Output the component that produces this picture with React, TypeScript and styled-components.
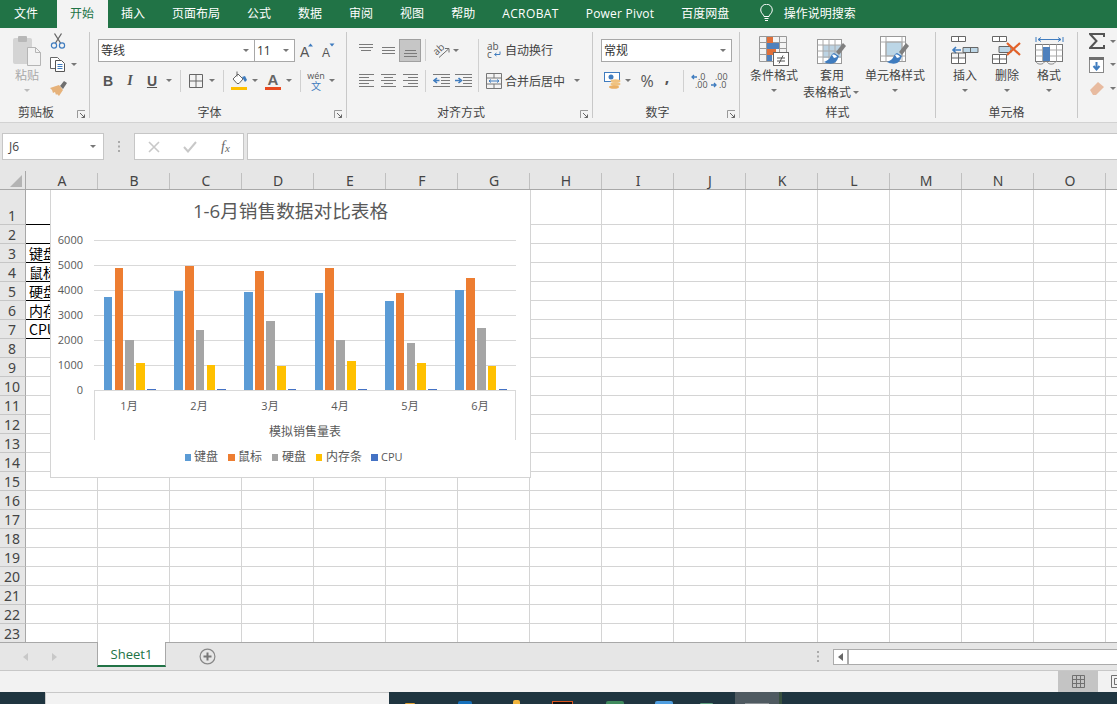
import React from 'react';
import styled, { createGlobalStyle } from 'styled-components';

const UI = `"Open Sans", "Noto Sans CJK SC", sans-serif`;

const Global = createGlobalStyle`
  html, body { margin: 0; padding: 0; overflow: hidden; background: #f2f2f2; }
  #root { width: 1117px; height: 704px; }
  * { box-sizing: border-box; }
`;

const Page = styled.div`
  width: 1117px; height: 704px; display: flex; flex-direction: column; overflow: hidden;
  font-family: ${UI}; font-size: 12px; color: #444;
`;

/* ---- tabs ---- */
const TabBar = styled.div`
  height: 28px; flex: none; background: #217346; display: flex; align-items: stretch; padding-left: 0.5px;
`;
const Tab = styled.div<{ $active?: boolean; $mr?: number; $ls?: number }>`
  padding: 0 13.5px 2px; display: flex; align-items: center; white-space: nowrap;
  color: ${p => (p.$active ? '#217346' : '#fff')};
  background: ${p => (p.$active ? '#f3f3f3' : 'transparent')};
  margin-right: ${p => p.$mr ?? 0}px; letter-spacing: ${p => p.$ls ?? 0}px;
`;
const Tell = styled.div`
  display: flex; align-items: center; gap: 11px; margin-left: 17px; color: #fff; padding-bottom: 2px; white-space: nowrap;
`;

/* ---- ribbon ---- */
const Ribbon = styled.div`
  height: 95px; flex: none; background: #f3f3f3; border-bottom: 1px solid #d2d2d2;
  display: flex; padding-top: 4px; padding-bottom: 4px;
`;
const Group = styled.div<{ $w: number; $last?: boolean }>`
  width: ${p => p.$w}px; flex: none; display: flex; flex-direction: column; justify-content: space-between;
  border-right: ${p => (p.$last ? 'none' : '1px solid #c8c8c8')};
`;
const Body = styled.div<{ $pl?: number }>`
  display: flex; padding-left: ${p => p.$pl ?? 0}px;
`;
const Rows = styled.div`
  display: flex; flex-direction: column; gap: 8px; padding-top: 7px;
`;
const Row = styled.div<{ $ml?: number }>`
  display: flex; align-items: center; height: 22.5px; margin-left: ${p => p.$ml ?? 0}px;
`;
const Footer = styled.div`
  height: 15px; margin-bottom: -2px; display: flex; align-items: center;
`;
const GroupLabel = styled.div`
  flex: 1; text-align: center; line-height: 15px; color: #444;
`;
const Launcher = styled.div`
  width: 17px; display: flex; justify-content: flex-end; padding-right: 3px; padding-top: 3px;
`;
const Tool = styled.div<{ $w?: number; $ml?: number; $on?: boolean }>`
  width: ${p => p.$w ?? 22}px; height: 22.5px; flex: none; display: flex; align-items: center; justify-content: center;
  margin-left: ${p => p.$ml ?? 0}px;
  background: ${p => (p.$on ? '#c6c6c6' : 'transparent')};
  border: ${p => (p.$on ? '1px solid #a0a0a0' : 'none')};
`;
const Caret = styled.div<{ $w?: number; $ml?: number; $tone?: string }>`
  width: ${p => p.$w ?? 10}px; flex: none; display: flex; justify-content: center; margin-left: ${p => p.$ml ?? 0}px;
  &::after {
    content: ''; width: 0; height: 0;
    border-left: 3.5px solid transparent; border-right: 3.5px solid transparent;
    border-top: 3.5px solid ${p => p.$tone ?? '#777'};
  }
`;
const VSep = styled.div<{ $ml?: number; $mr?: number; $reach?: boolean }>`
  width: 1px; height: 22px; flex: none; background: #d0d0d0; align-self: flex-start;
  margin-left: ${p => p.$ml ?? 0}px; margin-right: ${p => p.$mr ?? 0}px;
  ${p => (p.$reach ? 'height: 31px;' : '')}
`;
const Combo = styled.div<{ $w: number; $ml?: number }>`
  width: ${p => p.$w}px; height: 23px; flex: none; margin-left: ${p => p.$ml ?? 0}px;
  background: #fff; border: 1px solid #a8a8a8; display: flex; align-items: center; justify-content: space-between;
  padding: 1px 4px 0 2px; color: #333; line-height: 1;
`;
const BoldLetter = styled.span`
  font: bold 14px "Liberation Sans", sans-serif; color: #555;
`;
const ItalicLetter = styled.span`
  font: italic bold 14px "Liberation Serif", serif; color: #555;
`;
const UnderLetter = styled.span`
  font: bold 14px "Liberation Sans", sans-serif; color: #555; text-decoration: underline;
`;
const SymbolText = styled.span<{ $size?: number; $lift?: number; $bold?: boolean }>`
  font: ${p => (p.$bold ? 'bold ' : '')}${p => p.$size ?? 15}px "Open Sans", sans-serif; color: #555;
  padding-bottom: ${p => p.$lift ?? 0}px;
`;
const ToolText = styled.span`
  white-space: nowrap; color: #444; margin-left: 1px;
`;

const Big = styled.div<{ $w: number }>`
  width: ${p => p.$w}px; flex: none; display: flex; flex-direction: column; align-items: center; padding-top: 4px;
`;
const BigIcon = styled.div`
  height: 30px; display: flex; align-items: flex-start; justify-content: center;
`;
const BigLabel = styled.div<{ $off?: boolean }>`
  line-height: 15px; margin-top: 2px; white-space: nowrap; color: ${p => (p.$off ? '#a9a9a9' : '#444')};
  display: flex; align-items: center;
`;
const BigCaret = styled(Caret)`
  margin-top: 6px;
`;
const SmallCol = styled.div<{ $ml?: number }>`
  display: flex; flex-direction: column; gap: 5.5px; margin-left: ${p => p.$ml ?? 0}px;
`;
const SmallRow = styled.div`
  display: flex; align-items: center; height: 18px;
`;
const SmallTool = styled.div<{ $w?: number }>`
  width: ${p => p.$w ?? 16}px; height: 18px; flex: none; display: flex; align-items: center; justify-content: center;
`;

/* ---- formula bar ---- */
const FormulaBar = styled.div`
  height: 48px; flex: none; background: #e6e6e6; display: flex; padding: 10px 0 11px 2px;
`;
const FormulaBox = styled.div<{ $w?: number; $grow?: boolean; $ml?: number }>`
  background: #fff; border: 1px solid #c6c6c6; height: 27px; display: flex; align-items: center;
  width: ${p => (p.$w ? `${p.$w}px` : 'auto')}; flex: ${p => (p.$grow ? '1' : 'none')};
  margin-left: ${p => p.$ml ?? 0}px; margin-right: ${p => (p.$grow ? -2 : 0)}px;
`;
const NameBox = styled(FormulaBox)`
  justify-content: space-between; padding: 0 6px 0 6px; color: #444;
`;
const FormulaDots = styled.div`
  width: 30px; flex: none; display: flex; align-items: center; justify-content: center;
`;
const FormulaBtn = styled.div<{ $w: number }>`
  width: ${p => p.$w}px; flex: none; display: flex; justify-content: center; align-items: center;
`;
const FxText = styled.span`
  font: italic 14px "Liberation Serif", serif; color: #666;
`;
const FxSub = styled.span`
  font-size: 11px; vertical-align: -1px;
`;

/* ---- sheet ---- */
const SheetArea = styled.div`
  height: 471px; flex: none; position: relative; overflow: hidden; background: #fff;
`;
const SheetGrid = styled.div`
  display: grid; grid-template-columns: 26px repeat(16, 72px);
  grid-template-rows: 19px 35px repeat(22, 19px);
`;
const Corner = styled.div`
  background: #e6e6e6; border-right: 1px solid #a8a8a8; border-bottom: 1px solid #a8a8a8;
  display: flex; align-items: flex-end; justify-content: flex-end; padding: 0 3px 2px 0;
`;
const ColHead = styled.div`
  background: #e6e6e6; border-bottom: 1px solid #a8a8a8; position: relative;
  display: flex; align-items: center; justify-content: center;
  font: 14px "Noto Sans", sans-serif; color: #444; line-height: 1; padding-top: 1px;
  &::after { content: ''; position: absolute; right: 0; top: 2px; bottom: 0; width: 1px; background: #c0c0c0; }
`;
const RowHead = styled.div`
  background: #e6e6e6; border-right: 1px solid #a8a8a8; border-bottom: 1px solid #c6c6c6;
  display: flex; align-items: flex-end; justify-content: center;
  font: 14px "Noto Sans", sans-serif; color: #444; line-height: 16px; padding-right: 1px;
`;
const Cell = styled.div<{ $ruled?: boolean }>`
  border-right: 1px solid #d4d4d4; border-bottom: 1px solid ${p => (p.$ruled ? '#000' : '#d4d4d4')};
  font: 14px "Noto Sans CJK SC", sans-serif; color: #000; line-height: 18px; padding-left: 3px; white-space: nowrap;
  display: flex; align-items: flex-end;
`;
const Chart = styled.div`
  position: absolute; left: 50px; top: 19px; width: 481px; height: 288px;
  background: #fff; border: 1px solid #d4d4d4; border-top: none;
`;
const ChartSvg = styled.svg`
  display: block; margin-left: -1px; font-family: "Open Sans", "Noto Sans CJK SC", sans-serif;
`;

/* ---- sheet tabs ---- */
const SheetBar = styled.div`
  height: 29px; flex: none; background: #e6e6e6; border-top: 1px solid #a8a8a8; border-bottom: 1px solid #c8c8c8;
  display: flex; align-items: center;
`;
const NavArea = styled.div`
  width: 97px; flex: none; display: flex; padding-left: 23px; gap: 23px;
`;
const SheetTab = styled.div`
  width: 69px; height: 25px; flex: none; align-self: flex-start; margin-top: -1px; background: #fff;
  border-left: 1px solid #a8a8a8; border-right: 1px solid #a8a8a8; border-bottom: 2px solid #217346;
  display: flex; align-items: center; justify-content: center; color: #217346; font-size: 13px;
`;
const AddSheet = styled.div`
  margin-left: 33px; display: flex;
`;
const BarDots = styled.div`
  margin-left: auto; margin-right: 14px; display: flex;
`;
const HScroll = styled.div`
  width: 284px; height: 16px; flex: none; background: #fff; border: 1px solid #ababab; border-right: none; display: flex;
`;
const HScrollBtn = styled.div`
  width: 15px; border-right: 2px solid #ababab; display: flex; align-items: center; justify-content: center;
`;

/* ---- status + taskbar ---- */
const StatusBar = styled.div`
  height: 21px; flex: none; background: #f2f2f2; display: flex; padding-left: 1058px; overflow: hidden;
`;
const ViewBtn = styled.div<{ $on?: boolean }>`
  width: 40px; flex: none; display: flex; align-items: center; justify-content: center;
  background: ${p => (p.$on ? '#c4c4c4' : 'transparent')};
`;
const Taskbar = styled.div`
  height: 12px; flex: none; background: #1f3540; display: flex; align-items: flex-end; overflow: hidden;
`;
const SearchBox = styled.div`
  width: 344px; height: 12px; flex: none; margin-left: 45px; background: #f2f2f2; border-top: 1px solid #c8c8c8; border-left: 1px solid #c8c8c8;
`;
const TaskIcon = styled.div<{ $w: number; $h: number; $c: string; $ml: number }>`
  width: ${p => p.$w}px; height: ${p => p.$h}px; flex: none; background: ${p => p.$c}; margin-left: ${p => p.$ml}px;
  border-radius: 2px 2px 0 0;
`;
const TaskFramed = styled.div`
  width: 21px; height: 3px; flex: none; margin-left: 32px; background: #111; border: 1px solid #d9541e; border-bottom: none;
`;
const TaskActive = styled.div`
  width: 44px; height: 12px; flex: none; margin-left: 22px; background: #4f5a61; display: flex; align-items: flex-end; justify-content: center;
`;
const TaskTip = styled.div`
  width: 24px; height: 1px; background: #8c9296;
`;
const TaskEdge = styled.div`
  width: 3px; height: 12px; flex: none; background: #38503f;
`;

/* ---- icons ---- */
const G = '#6f6f6f';
const BL = '#3f7cbf';

const Ico: React.FC<{ w: number; h: number; children: React.ReactNode }> = ({ w, h, children }) => (
  <svg width={w} height={h} viewBox={`0 0 ${w} ${h}`} style={{ display: 'block', flex: 'none' }}>{children}</svg>
);

const LauncherIcon = () => (
  <Ico w={9} h={9}>
    <path d="M0.5 8V0.5H8" fill="none" stroke="#999" />
    <path d="M3 3l4.5 4.5M4.5 7.5h3v-3" fill="none" stroke="#666" />
  </Ico>
);
const PasteIcon = () => (
  <Ico w={28} h={30}>
    <rect x="0" y="2" width="19" height="26" rx="2" fill="#d4d4d4" />
    <rect x="5" y="0" width="9" height="6" rx="1" fill="#b8b8b8" />
    <path d="M14.5 11.5h8l5 5v13h-13z" fill="#f3f3f3" stroke="#b5b5b5" />
    <path d="M22.5 11.5v5h5" fill="none" stroke="#b5b5b5" />
  </Ico>
);
const ScissorsIcon = () => (
  <Ico w={16} h={16}>
    <path d="M5.5 10L11.5 0.5M10.5 10L4.5 0.5" stroke="#666" strokeWidth="1.3" fill="none" />
    <circle cx="4" cy="12.5" r="2.6" fill="none" stroke={BL} strokeWidth="1.2" />
    <circle cx="12" cy="12.5" r="2.6" fill="none" stroke={BL} strokeWidth="1.2" />
  </Ico>
);
const CopyIcon = () => (
  <Ico w={16} h={15}>
    <path d="M0.5 0.5h7l2 2v9h-9z" fill="#fff" stroke="#666" />
    <path d="M5.5 3.5h6l3 3v8h-9z" fill="#fff" stroke="#555" />
    <path d="M7.5 7.5h5M7.5 9.5h5M7.5 11.5h5" stroke={BL} />
  </Ico>
);
const PainterIcon = () => (
  <Ico w={17} h={15}>
    <path d="M10 5l4-5 3 2-4 6z" fill="#6f6f6f" />
    <path d="M0 7l9-3 4 5-4 6-2-2-1 1-1-3-2 1-1-3z" fill="#e6b27a" />
  </Ico>
);
const GrowIcon: React.FC<{ up?: boolean }> = ({ up }) => (
  <Ico w={18} h={16}>
    <text x="2" y="15" fontSize={up ? 14 : 12} fill="#555" fontFamily="Liberation Sans, sans-serif">A</text>
    {up ? <path d="M10 4.5l2.5-3 2.5 3z" fill={BL} /> : <path d="M9.5 1.5h5l-2.5 3z" fill={BL} />}
  </Ico>
);
const BordersIcon = () => (
  <Ico w={14} h={14}>
    <path d="M0.5 0.5h13v13h-13zM7 0.5v13M0.5 7h13" fill="none" stroke="#666" />
  </Ico>
);
const FillIcon = () => (
  <Ico w={16} h={19}>
    <path d="M2 8l5-5 5 5-4 4.5h-2z" fill="#fff" stroke="#666" />
    <path d="M6 0.5v5" stroke="#666" />
    <path d="M11 6l3-1 2 4-2 2z" fill={BL} />
    <rect x="0" y="16" width="16" height="3" fill="#ffc000" />
  </Ico>
);
const FontColorIcon = () => (
  <Ico w={16} h={19}>
    <text x="8" y="14" textAnchor="middle" fontSize="15" fontWeight="bold" fill="#666" fontFamily="Liberation Sans, sans-serif">A</text>
    <rect x="0" y="16" width="16" height="3" fill="#ea4a1f" />
  </Ico>
);
const WenIcon = () => (
  <Ico w={22} h={21}>
    <text x="11" y="9" textAnchor="middle" fontSize="9" fill="#555" fontFamily="Open Sans, sans-serif">wén</text>
    <text x="11" y="20" textAnchor="middle" fontSize="10" fill={BL} fontFamily="Noto Sans CJK SC, sans-serif">文</text>
  </Ico>
);
const Lines: React.FC<{ w?: number; lines: [number, number, number][] }> = ({ w = 15, lines }) => (
  <Ico w={w} h={15}>
    {lines.map(([x1, x2, y], i) => <path key={i} d={`M${x1} ${y + 0.5}H${x2}`} stroke="#7a7a7a" />)}
  </Ico>
);
const OrientIcon = () => (
  <Ico w={17} h={17}>
    <text x="1" y="11" fontSize="10" fill="#555" transform="rotate(-42 6 9)" fontFamily="Open Sans, sans-serif">ab</text>
    <path d="M6 15.5L15.5 7M12 6.5h4v4" fill="none" stroke={G} />
  </Ico>
);
const WrapIcon = () => (
  <Ico w={14} h={16}>
    <text x="0" y="7.5" fontSize="10" fill="#555" fontFamily="Open Sans, sans-serif">ab</text>
    <text x="0" y="15.5" fontSize="10" fill="#555" fontFamily="Open Sans, sans-serif">c</text>
    <path d="M13 9.5v3h-5M9.5 11l-2 1.5 2 1.5" fill="none" stroke={BL} />
  </Ico>
);
const MergeIcon = () => (
  <Ico w={16} h={16}>
    <path d="M0.5 0.5h15v15h-15zM0.5 5h15M0.5 11h15M8 0.5V5M8 11v4.5" fill="none" stroke="#777" />
    <path d="M3 8h10M5 6.5L3 8l2 1.5M11 6.5L13 8l-2 1.5" fill="none" stroke={BL} />
  </Ico>
);
const IndentIcon: React.FC<{ inc?: boolean }> = ({ inc }) => (
  <Ico w={17} h={13}>
    <path d="M0 0.5h17M8 3.5h9M8 6.5h9M8 9.5h9M0 12.5h17" stroke="#7a7a7a" />
    {inc
      ? <path d="M0 6.5h5M3.5 4L6.5 6.5 3.5 9" fill="none" stroke={BL} strokeWidth="1.6" />
      : <path d="M1.5 6.5h5M4 4L1 6.5 4 9" fill="none" stroke={BL} strokeWidth="1.6" />}
  </Ico>
);
const CurrencyIcon = () => (
  <Ico w={17} h={17}>
    <rect x="0.5" y="0.5" width="15" height="9" fill="#fff" stroke={BL} />
    <circle cx="7" cy="5" r="2.5" fill={BL} />
    <ellipse cx="11.5" cy="9" rx="5" ry="1.8" fill="#f0c27f" />
    <ellipse cx="11.5" cy="12" rx="5" ry="1.8" fill="#f0c27f" />
    <ellipse cx="10" cy="15" rx="5" ry="1.8" fill="#eab066" />
  </Ico>
);
const DecimalIcon: React.FC<{ inc?: boolean }> = ({ inc }) => (
  <Ico w={18} h={18}>
    <text x={inc ? 8 : 4} y="8" fontSize="9" fill="#555" fontFamily="Open Sans, sans-serif">{inc ? '.0' : '.00'}</text>
    <text x={inc ? 5 : 8} y="16" fontSize="9" fill="#555" fontFamily="Open Sans, sans-serif">{inc ? '.00' : '.0'}</text>
    {inc
      ? <path d="M7 5H2M4 3L2 5l2 2" fill="none" stroke={BL} strokeWidth="1.3" />
      : <path d="M0 13h5M3 11l2 2-2 2" fill="none" stroke={BL} strokeWidth="1.3" />}
  </Ico>
);
const CondIcon = () => (
  <Ico w={30} h={30}>
    <path d="M0.5 0.5h27v25h-27zM7.5 0.5v25M20.5 0.5v25M0.5 6.5h27M0.5 12.5h27M0.5 18.5h27" fill="none" stroke="#999" />
    <rect x="8" y="1" width="6" height="6" fill="#e0703a" />
    <rect x="8" y="7" width="12" height="6" fill="#4f81bd" />
    <rect x="8" y="13" width="9" height="6" fill="#e0703a" />
    <rect x="8" y="19" width="5" height="6" fill="#4f81bd" />
    <rect x="14.5" y="16.5" width="15" height="13" fill="#fff" stroke="#666" />
    <path d="M18 22h8M18 25h8M24 19.5l-4 8" fill="none" stroke="#555" />
  </Ico>
);
const Brush = () => (
  <>
    <path d="M19 16l7-9 3 3-7 9z" fill="#7f7f7f" />
    <path d="M17 17c-3 1-3 4-5 6-2 2-5 3-5 3s5 3 10 1c3-1 4-5 5-7z" fill="#3f7cbf" />
    <path d="M15 19c2-1 4 0 5 2l-3 1z" fill="#fff" />
  </>
);
const TableStyleIcon = () => (
  <Ico w={30} h={30}>
    <rect x="0.5" y="3.5" width="24" height="24" fill="#fff" stroke="#999" />
    <rect x="6" y="9" width="18" height="13" fill="#bcd3e3" />
    <path d="M0.5 9h24M0.5 15h24M0.5 21h24M6 3.5v24M12 3.5v24M18 3.5v24" stroke="#aaa" fill="none" />
    <Brush />
  </Ico>
);
const CellStyleIcon = () => (
  <Ico w={30} h={30}>
    <rect x="0.5" y="0.5" width="25" height="25" fill="#fff" stroke="#999" />
    <rect x="6" y="6" width="16" height="14" fill="#bcd6e6" stroke="#aaa" />
    <path d="M0.5 6h25M0.5 20h25M6 0.5v25M22 0.5v25" stroke="#aaa" fill="none" />
    <Brush />
  </Ico>
);
const InsertIcon = () => (
  <Ico w={28} h={28}>
    <path d="M0.5 0.5h14v5h-14zM7.5 0.5v5" fill="#fff" stroke="#666" />
    <path d="M12 11.5h15v5H12zM19.5 11.5v5" fill="#bcd6e6" stroke="#666" />
    <path d="M10 14H2M5 11l-3 3 3 3" fill="none" stroke={BL} strokeWidth="1.6" />
    <path d="M0.5 22h14v5.5h-14zM7.5 22v5.5" fill="#fff" stroke="#666" />
    <path d="M0.5 17v5" stroke="#666" /><path d="M14.5 17v5M7.5 17v5" stroke="#666" />
    <path d="M0.5 17h14" stroke="#666" />
  </Ico>
);
const DeleteIcon = () => (
  <Ico w={30} h={28}>
    <path d="M0.5 0.5h14v5h-14zM7.5 0.5v5" fill="#fff" stroke="#666" />
    <path d="M7 10.5h12v6H7z" fill="#bcd6e6" stroke="#666" />
    <path d="M15 7l13 12M28 7L15 19" stroke="#e2622a" strokeWidth="2.2" fill="none" />
    <path d="M0.5 18.5h14v9h-14zM7.5 18.5v9M0.5 23h14" fill="#fff" stroke="#666" />
  </Ico>
);
const FormatIcon = () => (
  <Ico w={29} h={30}>
    <path d="M1 1v5M28 1v5" stroke={BL} />
    <path d="M3 3.5h23M6 1.5L3 3.5l3 2M23 1.5l3 2-3 2" fill="none" stroke={BL} />
    <rect x="0.5" y="8.5" width="27" height="17" fill="#fff" stroke="#777" />
    <path d="M0.5 14h27M0.5 20h27M7.5 8.5v17M14.5 8.5v17M21.5 8.5v17" stroke="#aaa" fill="none" />
    <rect x="8" y="11" width="7" height="14" fill="#4f81bd" />
    <path d="M1 25.5c1 3 5 3 7 2l2-2M12 25.5c1 3 5 3 7 2l2-2" fill="none" stroke="#888" />
  </Ico>
);
const SigmaIcon = () => (
  <Ico w={16} h={16}>
    <path d="M15 4V1H1l6.5 7L1 15h14v-3" fill="none" stroke="#555" strokeWidth="2" />
  </Ico>
);
const FillDownIcon = () => (
  <Ico w={16} h={16}>
    <rect x="0.5" y="0.5" width="14" height="15" fill="#fff" stroke="#888" />
    <rect x="0" y="0" width="15" height="3" fill="#6f6f6f" />
    <path d="M7.5 5v7M4.5 9l3 3.5 3-3.5" fill="none" stroke={BL} strokeWidth="2" />
  </Ico>
);
const EraserIcon = () => (
  <Ico w={14} h={13}>
    <path d="M0 8l8-8 6 5-8 8H3z" fill="#e8bba0" />
  </Ico>
);
const Bulb = () => (
  <Ico w={13} h={18}>
    <path d="M4 12.5c0-2-3.3-3-3.3-6.5a5.8 5.8 0 0 1 11.6 0c0 3.5-3.3 4.5-3.3 6.5z" fill="none" stroke="#fff" />
    <path d="M4.5 14.5h4M5 16.5h3" stroke="#fff" />
  </Ico>
);
const CrossIcon = () => (
  <Ico w={12} h={12}><path d="M1 1l10 10M11 1L1 11" stroke="#c8c8c8" strokeWidth="1.6" /></Ico>
);
const CheckIcon = () => (
  <Ico w={14} h={12}><path d="M1 6l4 4.5L13 1" stroke="#c8c8c8" strokeWidth="2" fill="none" /></Ico>
);
const GripDots = () => (
  <Ico w={2} h={11}><path d="M0 0h2v2H0zM0 4.5h2v2H0zM0 9h2v2H0z" fill="#aaa" /></Ico>
);
const CornerMark = () => (
  <Ico w={12} h={12}><path d="M12 0v12H0z" fill="#b4b4b4" /></Ico>
);
const ArrowTri: React.FC<{ right?: boolean; c?: string; h?: number }> = ({ right, c = '#c8c8c8', h = 8 }) => (
  <Ico w={6} h={h}>
    <path d={right ? `M0 0l5 ${h / 2}-5 ${h / 2}z` : `M5 0L0 ${h / 2}l5 ${h / 2}z`} fill={c} />
  </Ico>
);
const PlusCircle = () => (
  <Ico w={17} h={17}>
    <circle cx="8.5" cy="8.5" r="7.4" fill="none" stroke="#888" strokeWidth="1.2" />
    <path d="M8.5 4.5v8M4.5 8.5h8" stroke="#777" strokeWidth="2" />
  </Ico>
);
const ViewGrid = () => (
  <Ico w={13} h={13}>
    <path d="M0.5 0.5h12v12h-12zM4.5 0.5v12M8.5 0.5v12M0.5 4.5h12M0.5 8.5h12" fill="none" stroke="#707070" />
  </Ico>
);
const ViewPage = () => (
  <Ico w={14} h={13}>
    <path d="M0.5 0.5h13v12h-13zM3.5 3.5h7v6h-7z" fill="none" stroke="#707070" />
  </Ico>
);

/* ---- data ---- */
const columns = 'ABCDEFGHIJKLMNOP'.split('');
const rowNumbers = Array.from({ length: 23 }, (_, i) => i + 1);
const rowText: Record<number, string> = { 3: '键盘', 4: '鼠标', 5: '硬盘', 6: '内存条', 7: 'CPU' };
const tabs: { label: string; ls?: number }[] = [
  { label: '插入' }, { label: '页面布局' }, { label: '公式' }, { label: '数据' }, { label: '审阅' },
  { label: '视图' }, { label: '帮助' }, { label: 'ACROBAT', ls: 0.4 }, { label: 'Power Pivot', ls: 0.2 }, { label: '百度网盘' },
];

const series = [
  { name: '键盘', color: '#5b9bd5' },
  { name: '鼠标', color: '#ed7d31' },
  { name: '硬盘', color: '#a5a5a5' },
  { name: '内存条', color: '#ffc000' },
  { name: 'CPU', color: '#4472c4' },
];
const months = [
  { label: '1月', h: [93, 122, 50, 27, 1], cx: 129 },
  { label: '2月', h: [99, 124, 60, 25, 1], cx: 199 },
  { label: '3月', h: [98, 119, 69, 24, 1], cx: 270 },
  { label: '4月', h: [97, 122, 50, 29, 1], cx: 340 },
  { label: '5月', h: [89, 97, 47, 27, 1], cx: 410 },
  { label: '6月', h: [100, 112, 62, 24, 1], cx: 480 },
];
const OX = 50; const OY = 190;
const legend = [
  { x: 185, w: 6, tx: 194, fs: 12 }, { x: 228, w: 7, tx: 238, fs: 12 }, { x: 272, w: 6, tx: 282, fs: 12 },
  { x: 316, w: 6, tx: 326, fs: 12 }, { x: 371, w: 7, tx: 381, fs: 11 },
];

const ChartDrawing = () => (
  <ChartSvg width={481} height={287} viewBox="0 0 481 287">
    <text x={290.5 - OX} y={218 - OY} textAnchor="middle" fontSize="18.67" fill="#595959">1-6月销售数据对比表格</text>
    {[0, 1, 2, 3, 4, 5, 6].map(i => {
      const y = 240 + i * 25 - OY;
      return (
        <g key={i}>
          <path d={`M${94 - OX} ${y + 0.5}H${516 - OX}`} stroke="#d9d9d9" />
          <text x={83 - OX} y={y + 4} textAnchor="end" fontSize="11" fill="#595959">{(6 - i) * 1000}</text>
        </g>
      );
    })}
    <path d={`M${94.5 - OX} ${390 - OY}V${440 - OY}M${515.5 - OX} ${390 - OY}V${440 - OY}`} stroke="#d9d9d9" />
    {months.map((m, i) => (
      <g key={m.label}>
        {m.h.map((h, j) => {
          const a = 103.7 + 70.3 * i + 10.85 * j;
          const x1 = Math.round(a); const x2 = Math.round(a + 8.7);
          return <rect key={j} x={x1 - OX} y={390 - h - OY} width={x2 - x1} height={h} fill={series[j].color} shapeRendering="crispEdges" />;
        })}
        <text x={m.cx - OX} y={410 - OY} textAnchor="middle" fontSize="11" fill="#595959">{m.label}</text>
      </g>
    ))}
    <text x={305 - OX} y={436 - OY} textAnchor="middle" fontSize="12" fill="#595959">模拟销售量表</text>
    {series.map((s, i) => (
      <g key={s.name}>
        <rect x={legend[i].x - OX} y={454 - OY} width={legend[i].w} height={7} fill={s.color} />
        <text x={legend[i].tx - OX} y={461 - OY} fontSize={legend[i].fs} fill="#595959">{s.name}</text>
      </g>
    ))}
  </ChartSvg>
);

const Foot: React.FC<{ label: string; launcher?: boolean }> = ({ label, launcher }) => (
  <Footer>
    <GroupLabel>{label}</GroupLabel>
    {launcher && <Launcher><LauncherIcon /></Launcher>}
  </Footer>
);

export default function App() {
  return (
    <Page>
      <Global />
      <TabBar>
        <Tab $mr={5}>文件</Tab>
        <Tab $active>开始</Tab>
        {tabs.map(t => <Tab key={t.label} $ls={t.ls}>{t.label}</Tab>)}
        <Tell><Bulb /><span>操作说明搜索</span></Tell>
      </TabBar>

      <Ribbon>
        <Group $w={90}>
          <Body $pl={8}>
            <Big $w={38}>
              <BigIcon><PasteIcon /></BigIcon>
              <BigLabel $off>粘贴</BigLabel>
              <BigCaret $tone="#bbb" />
            </Big>
            <SmallCol $ml={4}>
              <SmallRow><SmallTool $w={16}><ScissorsIcon /></SmallTool></SmallRow>
              <SmallRow><SmallTool $w={16}><CopyIcon /></SmallTool><Caret $w={16} /></SmallRow>
              <SmallRow><SmallTool $w={16}><PainterIcon /></SmallTool></SmallRow>
            </SmallCol>
          </Body>
          <Foot label="剪贴板" launcher />
        </Group>

        <Group $w={257}>
          <Rows>
            <Row $ml={8}>
              <Combo $w={157}><span>等线</span><Caret $w={8} /></Combo>
              <Combo $w={41} $ml={-1}><span>11</span><Caret $w={8} /></Combo>
              <Tool $w={22} $ml={1}><GrowIcon up /></Tool>
              <Tool $w={21}><GrowIcon /></Tool>
            </Row>
            <Row $ml={7}>
              <Tool><BoldLetter>B</BoldLetter></Tool>
              <Tool><ItalicLetter>I</ItalicLetter></Tool>
              <Tool><UnderLetter>U</UnderLetter></Tool>
              <Caret $w={12} />
              <VSep $ml={5} $mr={4} />
              <Tool><BordersIcon /></Tool>
              <Caret />
              <VSep $ml={6} $mr={4} />
              <Tool><FillIcon /></Tool>
              <Caret />
              <Tool $w={26}><FontColorIcon /></Tool>
              <Caret $w={6} />
              <VSep $ml={8} $mr={4} />
              <Tool><WenIcon /></Tool>
              <Caret />
            </Row>
          </Rows>
          <Foot label="字体" launcher />
        </Group>

        <Group $w={246}>
          <Rows>
            <Row $ml={8}>
              <Tool><Lines lines={[[0, 14, 1], [0, 14, 4], [2, 12, 7]]} /></Tool>
              <Tool><Lines lines={[[1, 14, 4], [1, 14, 7], [1, 14, 10]]} /></Tool>
              <Tool $on><Lines lines={[[2, 13, 7], [1, 14, 10], [1, 14, 13]]} /></Tool>
              <VSep $ml={4} $mr={4} />
              <Tool><OrientIcon /></Tool>
              <Caret $w={8} />
              <VSep $ml={18} $mr={5} $reach />
              <Tool $w={20}><WrapIcon /></Tool>
              <ToolText>自动换行</ToolText>
            </Row>
            <Row $ml={8}>
              <Tool><Lines lines={[[0, 15, 1], [0, 10, 4], [0, 15, 7], [0, 10, 10], [0, 15, 13]]} /></Tool>
              <Tool><Lines lines={[[0, 15, 1], [3, 12, 4], [0, 15, 7], [3, 12, 10], [0, 15, 13]]} /></Tool>
              <Tool><Lines lines={[[0, 15, 1], [5, 15, 4], [0, 15, 7], [5, 15, 10], [0, 15, 13]]} /></Tool>
              <VSep $ml={4} $mr={4} />
              <Tool><IndentIcon /></Tool>
              <Tool><IndentIcon inc /></Tool>
              <VSep $ml={4} $mr={5} />
              <Tool $w={20}><MergeIcon /></Tool>
              <ToolText>合并后居中</ToolText>
              <Caret $w={8} $ml={8} />
            </Row>
          </Rows>
          <Foot label="对齐方式" launcher />
        </Group>

        <Group $w={147}>
          <Rows>
            <Row $ml={8}>
              <Combo $w={131}><span>常规</span><Caret $w={8} /></Combo>
            </Row>
            <Row $ml={8}>
              <Tool $w={18} $ml={2}><CurrencyIcon /></Tool>
              <Caret $ml={2} />
              <Tool $w={20} $ml={4}><SymbolText $size={16}>%</SymbolText></Tool>
              <Tool $w={20}><SymbolText $size={16} $bold $lift={7}>,</SymbolText></Tool>
              <VSep $ml={6} $mr={5} />
              <Tool $w={20}><DecimalIcon inc /></Tool>
              <Tool $w={20} $ml={1}><DecimalIcon /></Tool>
            </Row>
          </Rows>
          <Foot label="数字" launcher />
        </Group>

        <Group $w={196}>
          <Body $pl={6}>
            <Big $w={56}>
              <BigIcon><CondIcon /></BigIcon>
              <BigLabel>条件格式</BigLabel>
              <BigCaret />
            </Big>
            <Big $w={60}>
              <BigIcon><TableStyleIcon /></BigIcon>
              <BigLabel>套用</BigLabel>
              <BigLabel>表格格式<Caret $w={10} /></BigLabel>
            </Big>
            <Big $w={66}>
              <BigIcon><CellStyleIcon /></BigIcon>
              <BigLabel>单元格样式</BigLabel>
              <BigCaret />
            </Big>
          </Body>
          <Foot label="样式" />
        </Group>

        <Group $w={142}>
          <Body $pl={8}>
            <Big $w={42}>
              <BigIcon><InsertIcon /></BigIcon>
              <BigLabel>插入</BigLabel>
              <BigCaret />
            </Big>
            <Big $w={42}>
              <BigIcon><DeleteIcon /></BigIcon>
              <BigLabel>删除</BigLabel>
              <BigCaret />
            </Big>
            <Big $w={42}>
              <BigIcon><FormatIcon /></BigIcon>
              <BigLabel>格式</BigLabel>
              <BigCaret />
            </Big>
          </Body>
          <Foot label="单元格" />
        </Group>

        <Group $w={39} $last>
          <Body $pl={10}>
            <SmallCol>
              <SmallRow><SmallTool $w={18}><SigmaIcon /></SmallTool><Caret $w={14} /></SmallRow>
              <SmallRow><SmallTool $w={18}><FillDownIcon /></SmallTool><Caret $w={14} /></SmallRow>
              <SmallRow><SmallTool $w={18}><EraserIcon /></SmallTool><Caret $w={14} /></SmallRow>
            </SmallCol>
          </Body>
        </Group>
      </Ribbon>

      <FormulaBar>
        <NameBox $w={102}><span>J6</span><Caret $w={8} $tone="#777" /></NameBox>
        <FormulaDots><GripDots /></FormulaDots>
        <FormulaBox $w={110}>
          <FormulaBtn $w={37}><CrossIcon /></FormulaBtn>
          <FormulaBtn $w={36}><CheckIcon /></FormulaBtn>
          <FormulaBtn $w={35}><FxText>f<FxSub>x</FxSub></FxText></FormulaBtn>
        </FormulaBox>
        <FormulaBox $grow $ml={3} />
      </FormulaBar>

      <SheetArea>
        <SheetGrid>
          <Corner><CornerMark /></Corner>
          {columns.map(c => <ColHead key={c}>{c}</ColHead>)}
          {rowNumbers.map(r => (
            <React.Fragment key={r}>
              <RowHead>{r}</RowHead>
              {columns.map(c => (
                <Cell key={c} $ruled={c === 'A' && r <= 7}>{c === 'A' ? rowText[r] : ''}</Cell>
              ))}
            </React.Fragment>
          ))}
        </SheetGrid>
        <Chart><ChartDrawing /></Chart>
      </SheetArea>

      <SheetBar>
        <NavArea><ArrowTri /><ArrowTri right /></NavArea>
        <SheetTab>Sheet1</SheetTab>
        <AddSheet><PlusCircle /></AddSheet>
        <BarDots><GripDots /></BarDots>
        <HScroll><HScrollBtn><ArrowTri c="#666" /></HScrollBtn></HScroll>
      </SheetBar>

      <StatusBar>
        <ViewBtn $on><ViewGrid /></ViewBtn>
        <ViewBtn><ViewPage /></ViewBtn>
      </StatusBar>

      <Taskbar>
        <SearchBox />
        <TaskIcon $w={10} $h={1} $c="#e0a030" $ml={16} />
        <TaskIcon $w={14} $h={3} $c="#1670bb" $ml={43} />
        <TaskIcon $w={7} $h={4} $c="#f0b43c" $ml={41} />
        <TaskFramed />
        <TaskIcon $w={18} $h={3} $c="#3f8a5d" $ml={33} />
        <TaskIcon $w={18} $h={3} $c="#4f9ee0" $ml={31} />
        <TaskIcon $w={13} $h={1} $c="#5f9f7f" $ml={27} />
        <TaskActive><TaskTip /></TaskActive>
        <TaskEdge />
      </Taskbar>
    </Page>
  );
}
